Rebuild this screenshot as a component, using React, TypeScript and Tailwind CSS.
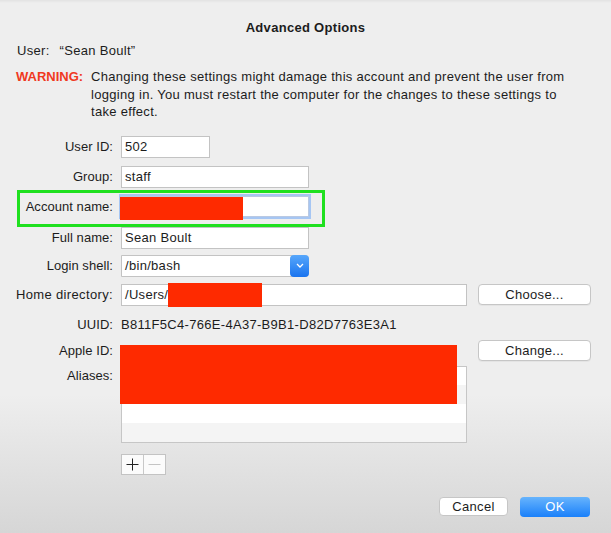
import React from 'react';

const font = { fontFamily: '"Liberation Sans", Arial, sans-serif' };

function Label({ children }: { children: React.ReactNode }) {
  return <div className="w-[114px] shrink-0 pr-[1px] text-right text-[13px] leading-[22px] tracking-[0.05px] text-[#1c1c1c] whitespace-nowrap">{children}</div>;
}

function Field({ value, w }: { value?: string; w: string }) {
  return (
    <div className={`${w} h-[22px] border border-[#c3c3c3] bg-white pl-[3px] text-[13px] leading-[20px] text-[#1c1c1c]`}>
      {value}
    </div>
  );
}

function Button({ children, w }: { children: React.ReactNode; w: string }) {
  return (
    <div className={`${w} h-[21px] rounded-[4px] border border-[#c6c6c6] bg-white text-center text-[13px] leading-[19px] text-[#1c1c1c] shadow-[0_1px_0_rgba(0,0,0,0.04)]`}>
      {children}
    </div>
  );
}

export default function App() {
  return (
    <div
      style={font}
      className="relative h-[533px] w-[611px] overflow-hidden bg-[linear-gradient(to_bottom,#e2e2e2_0px,#eeeeee_3px,#eeeeee_395px,#d6d6d6_533px)] tracking-[0.3px] text-[#1c1c1c]"
    >
      <div className="pt-[19px] text-center text-[13px] font-bold leading-[18px]">Advanced Options</div>

      <div className="mt-[5px] flex pl-[17px] text-[13px] leading-[18px]">
        <span>User:</span>
        <span className="ml-[10px]">“Sean Boult”</span>
      </div>

      <div className="mt-[8px] flex pl-[16px] text-[13px] leading-[17.5px]">
        <span className="w-[75px] shrink-0 font-bold tracking-normal text-[#f0391f]">WARNING:</span>
        <div className="whitespace-nowrap">
          Changing these settings might damage this account and prevent the user from
          <br />
          logging in. You must restart the computer for the changes to these settings to
          <br />
          take effect.
        </div>
      </div>

      {/* User ID */}
      <div className="mt-[15px] flex items-center gap-[7px]">
        <Label>User ID:</Label>
        <Field value="502" w="w-[89px]" />
      </div>

      {/* Group */}
      <div className="mt-[8px] flex items-center gap-[7px]">
        <Label>Group:</Label>
        <Field value="staff" w="w-[188px]" />
      </div>

      {/* Account name */}
      <div className="relative mt-[8px] flex items-center gap-[7px]">
        <Label>Account name:</Label>
        <div className="h-[21px] w-[188px] border border-[#b9c9e3] bg-white shadow-[0_0_0_2px_#a6c6f3]" />
        <div className="absolute left-[120px] top-[1px] h-[23px] w-[123px] bg-[#fe2a00]" />
        <div className="absolute left-[17px] top-[-6px] h-[37px] w-[308px] border-[3px] border-[#1fe01f]" />
      </div>

      {/* Full name */}
      <div className="mt-[9px] flex items-center gap-[7px]">
        <Label>Full name:</Label>
        <Field value="Sean Boult" w="w-[188px]" />
      </div>

      {/* Login shell */}
      <div className="mt-[6px] flex items-center gap-[7px]">
        <Label>Login shell:</Label>
        <div className="flex h-[22px] w-[188px] rounded-r-[4px] border border-[#c3c3c3] bg-white">
          <div className="flex-1 pl-[3px] text-[13px] leading-[20px]">/bin/bash</div>
          <div className="-my-[1px] -mr-[1px] flex w-[19px] items-center justify-center rounded-[4px] bg-[linear-gradient(to_bottom,#57a7fb,#1a74ef)]">
            <svg width="8" height="5" viewBox="0 0 8 5">
              <path d="M1 1 L4 4 L7 1" fill="none" stroke="white" strokeWidth="1.3" />
            </svg>
          </div>
        </div>
      </div>

      {/* Home directory */}
      <div className="relative mt-[7px] flex items-center gap-[7px]">
        <div className="w-[114px] shrink-0 pr-[1px] text-right text-[13px] leading-[22px] tracking-[0.35px] whitespace-nowrap">Home directory:</div>
        <div className="h-[22px] w-[346px] border border-[#c3c3c3] bg-white pl-[3px] text-[13px] leading-[20px]">/Users/</div>
        <div className="ml-[4px]">
          <Button w="w-[113px]">Choose...</Button>
        </div>
        <div className="absolute left-[168px] top-[-1px] h-[24px] w-[94px] bg-[#fe2a00]" />
      </div>

      {/* UUID */}
      <div className="mt-[8px] flex items-center gap-[7px]">
        <Label>UUID:</Label>
        <div className="text-[13px] leading-[22px]">B811F5C4-766E-4A37-B9B1-D82D7763E3A1</div>
      </div>

      {/* Apple ID */}
      <div className="mt-[4px] flex items-center gap-[7px]">
        <Label>Apple ID:</Label>
        <div className="w-[346px]" />
        <div className="ml-[4px]">
          <Button w="w-[113px]">Change...</Button>
        </div>
      </div>

      {/* Aliases */}
      <div className="relative mt-[4px] flex items-start gap-[7px]">
        <div className="w-[114px] shrink-0 pt-[1px] pr-[1px] text-right text-[13px] leading-[18px] tracking-[0.05px]">Aliases:</div>
        <div className="flex h-[77px] w-[346px] flex-col border border-[#c6c6c6] bg-white">
          <div className="h-[19px] bg-white" />
          <div className="h-[19px] bg-[#f4f4f4]" />
          <div className="h-[19px] bg-white" />
          <div className="h-[19px] bg-[#f4f4f4]" />
        </div>
        <div className="absolute left-[120px] top-[-21px] h-[59px] w-[337px] bg-[#fe2a00]" />
      </div>

      {/* + / - */}
      <div className="ml-[121px] mt-[11px] flex h-[21px] w-[45px] border border-[#c3c3c3] bg-[#fbfbfb]">
        <div className="flex w-[22px] items-center justify-center border-r border-[#c8c8c8]">
          <svg width="13" height="13" viewBox="0 0 13 13">
            <path d="M6.5 0.5 V12.5 M0.5 6.5 H12.5" stroke="#222" strokeWidth="1" />
          </svg>
        </div>
        <div className="flex flex-1 items-center justify-center">
          <svg width="13" height="13" viewBox="0 0 13 13">
            <path d="M0.5 6.5 H12.5" stroke="#c4c4c4" strokeWidth="1" />
          </svg>
        </div>
      </div>

      {/* Bottom buttons */}
      <div className="mt-[22px] flex justify-end gap-[12px] pr-[21px]">
        <div className="h-[19px] w-[69px] rounded-[4px] border border-[#c6c6c6] bg-white text-center text-[13px] leading-[17px]">Cancel</div>
        <div className="h-[20px] w-[70px] rounded-[4px] bg-[linear-gradient(to_bottom,#67b4fd,#1a80fa)] text-center text-[13px] leading-[20px] text-white">OK</div>
      </div>
    </div>
  );
}
